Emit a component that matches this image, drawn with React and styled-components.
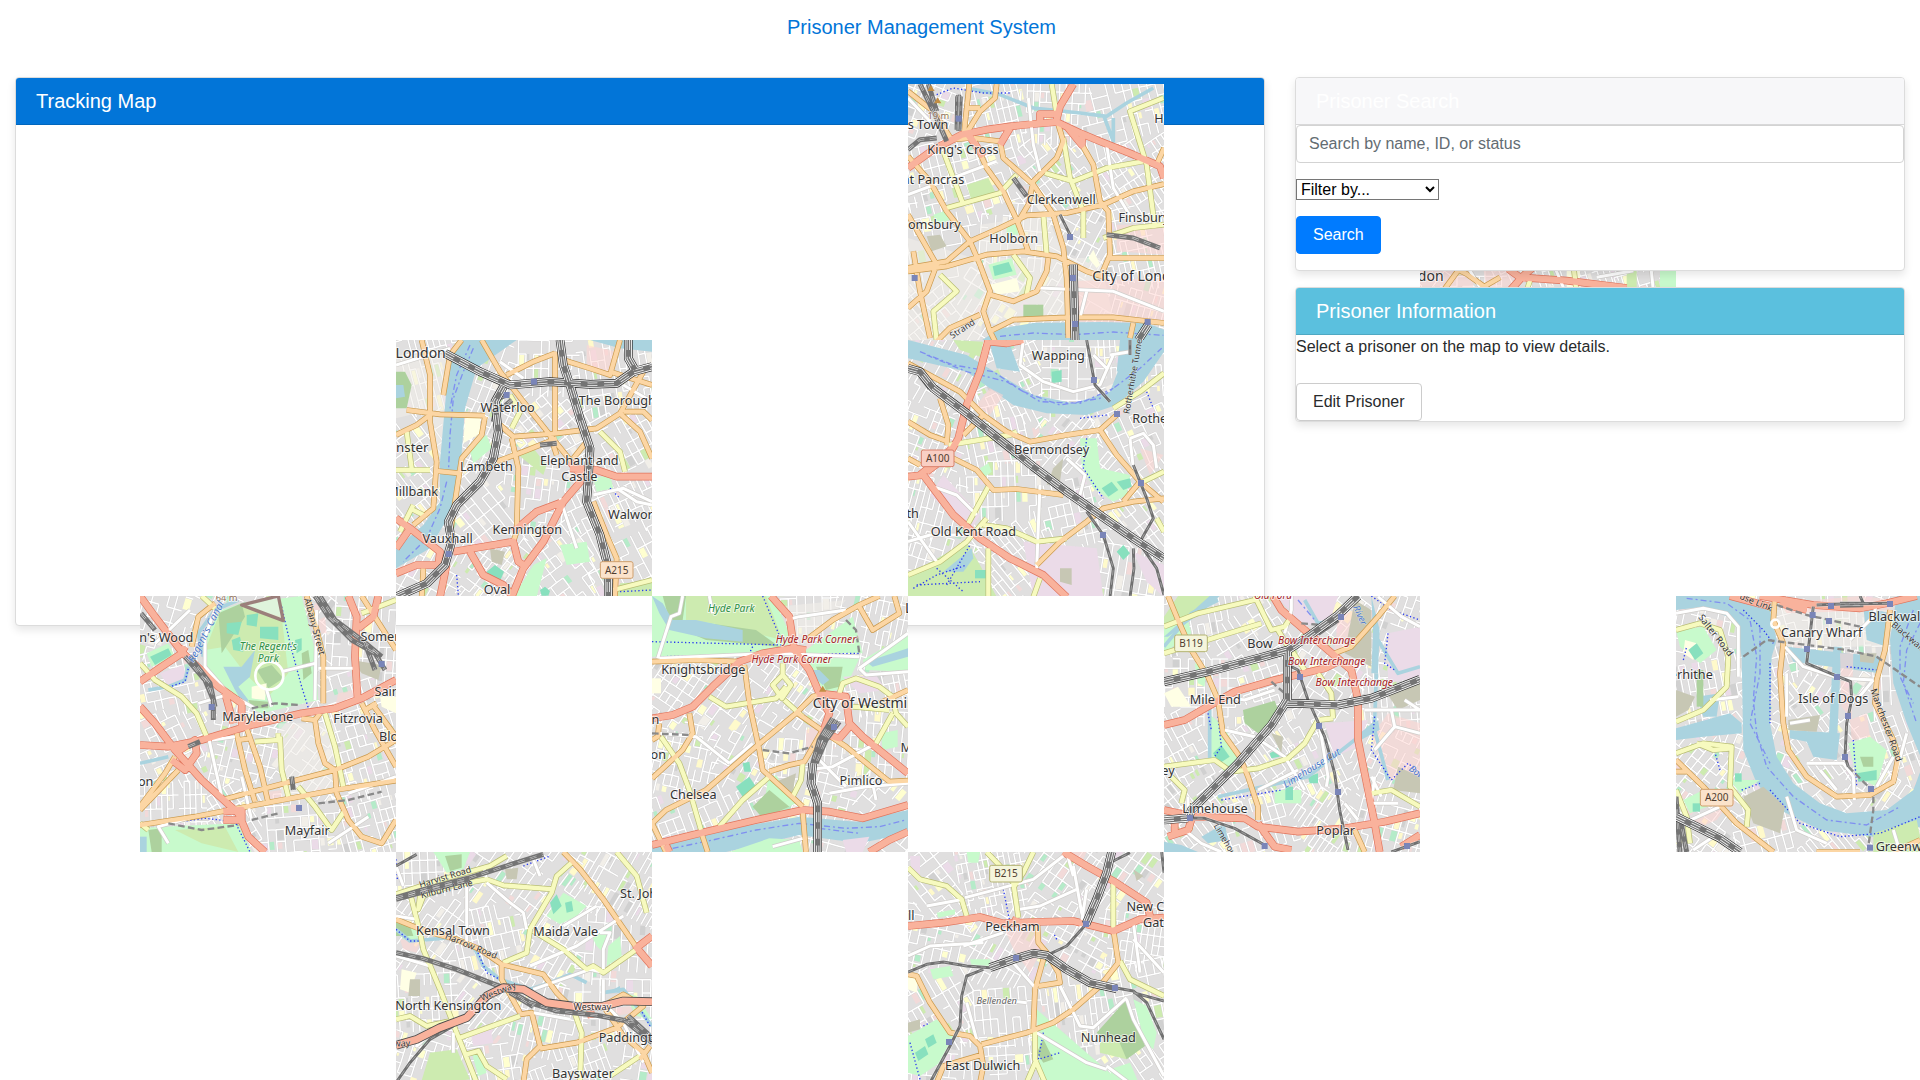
import React from 'react';
import styled, { createGlobalStyle } from 'styled-components';

const GlobalStyle = createGlobalStyle`
  *, *::before, *::after { box-sizing: border-box; }
  body {
    margin: 0;
    background: #fff;
    color: #292b2c;
    font: 16px/24px "Liberation Sans", Arial, sans-serif;
  }
`;

const Page = styled.div`
  min-height: 100vh;
  overflow: hidden;
`;

const Navbar = styled.nav`
  display: flex;
  justify-content: center;
  padding: 12px 93px 12px 16px;
  margin-bottom: 23px;
`;

const Brand = styled.a`
  color: #0275d8;
  font-size: 20px;
  line-height: 30px;
  text-decoration: none;
`;

const Columns = styled.main`
  display: grid;
  grid-template-columns: minmax(0, calc((100% + 30px) * 2 / 3 - 30px)) minmax(0, 1fr);
  gap: 30px;
  align-items: start;
  padding: 0 15px;
`;

const Sidebar = styled.div`
  display: flex;
  flex-direction: column;
  gap: 16px;
  position: relative;
  z-index: 2;
`;

const Card = styled.section`
  background: #fff;
  border: 1px solid #dcdcdc;
  border-radius: 4px;
  box-shadow: 0 4px 8px rgba(0, 0, 0, 0.1);
`;

const headerTones = {
  primary: '#0275d8',
  plain: '#f7f7f9',
  info: '#5bc0de',
};

const CardHeader = styled.h2`
  margin: 0;
  padding: 8px 20px;
  border-bottom: 1px solid rgba(0, 0, 0, 0.125);
  border-radius: 3px 3px 0 0;
  background: ${({ $tone }) => headerTones[$tone]};
  color: #fff;
  font-size: 20px;
  font-weight: 400;
  line-height: 30px;
`;

const SearchForm = styled.form`
  display: flex;
  flex-direction: column;
  align-items: flex-start;
  gap: 16px;
  padding-bottom: 16px;
`;

const TextField = styled.input`
  width: 100%;
  height: 38px;
  padding: 6px 12px;
  border: 1px solid #d3d3d3;
  border-radius: 4px;
  background: #fff;
  color: #464a4c;
  font: inherit;
  &::placeholder { color: #636c72; opacity: 1; }
`;

const Filter = styled.select`
  width: 143px;
  height: 21px;
  border: 1px solid #767676;
  border-radius: 0;
  background: #fff;
  color: #000;
  font-family: inherit;
  font-size: 16px;
`;

const buttonKinds = {
  primary: 'background: #007bff; border-color: #007bff; color: #fff;',
  secondary: 'background: #fff; border-color: #ccc; color: #292b2c;',
};

const Button = styled.button`
  padding: 6px 16px;
  border: 1px solid;
  border-radius: 4px;
  font: inherit;
  cursor: pointer;
  ${({ $kind }) => buttonKinds[$kind]}
`;

const Details = styled.div`
  display: flex;
  flex-direction: column;
  align-items: flex-start;
  gap: 24px;
`;

const Hint = styled.p`
  margin: 0;
`;

const MapCanvas = styled.div`
  position: relative;
  height: 500px;
  z-index: 1;
`;

const Tile = styled.svg`
  position: absolute;
  display: block;
  width: 256px;
  height: 256px;
  left: ${({ $col }) => 124 + $col * 256}px;
  top: ${({ $row }) => $row * 256 - 41}px;
  font-family: "Noto Sans", sans-serif;
`;

/* ---- map data: every coordinate is in tile units, three to a pixel ---- */

const fills = {
  water: '#aad3df', park: '#c8facc', grass: '#cdebb0', wood: '#add19e',
  pitch: '#88e0be', ind: '#ebdbe8', shop: '#ffd6d1', brown: '#c7c7b4',
  pale: '#f2efe9', yellow: '#ffffe5',
};

const roads = {
  white: { edge: '#cfcdca', color: '#ffffff', width: 9 },
  yellow: { edge: '#b8bd74', color: '#f7fabf', width: 13 },
  orange: { edge: '#c9994c', color: '#fcd6a4', width: 13 },
  red: { edge: '#e0745c', color: '#f9b29c', width: 19 },
};

const tiles = [
  {
    col: 3, row: 0, x: 24, y: 18, seed: 3,
    areas: [
      ['pale', '24,480 220,540 260,640 240,786 24,786'],
      ['pale', '250,540 600,540 640,720 270,740'],
      ['pale', '240,440 440,410 490,530 240,530'],
      ['shop', '500,610 792,600 792,740 500,730'],
      ['shop', '650,440 792,440 792,530 650,520'],
      ['park', '265,560 335,540 350,590 280,605'],
      ['pitch', '278,565 326,552 338,580 284,594'],
      ['wood', '370,680 430,680 430,718 370,718'],
      ['park', '100,410 135,398 150,425 115,440'],
      ['park', '320,440 350,440 355,470 320,470'],
      ['grass', '200,320 265,300 290,350 215,370'],
      ['brown', '80,475 120,470 140,505 95,520'],
      ['yellow', '565,540 580,515 600,560 590,570'],
      ['yellow', '270,620 350,600 360,640 290,650'],
      ['water', '240,790 300,752 400,735 600,732 740,735 792,755 792,790'],
    ],
    creeks: ['200,30 300,50 400,90 540,105 620,115 680,75 760,30', '610,110 640,190 640,120'],
    white: ['385,60 400,200 420,280', '24,350 130,310 290,250', '620,200 640,330 700,430', '420,630 640,640 792,700', '540,720 560,640', '24,60 90,130'],
    yellow: ['455,18 470,110', '435,285 520,310 620,270 730,250', '490,180 510,300 550,400 550,480', '140,390 300,345 350,290', '130,220 190,380', '790,60 690,100 740,260 765,450', '430,410 440,530', '120,590 170,640 100,700 110,790', '340,530 390,600 380,650', '610,480 700,450 792,440'],
    orange: ['24,40 100,100 155,185 210,180', '208,18 192,165', '290,18 285,60 240,100 200,165', '195,90 240,90', '220,180 300,190 310,240 400,320 460,410 490,510 500,600 505,780', '220,180 260,270 310,340 350,425 385,520', '24,235 90,310 140,400 210,490 240,560 270,640 250,700 270,760 285,790', '24,570 140,550 210,490 300,450 380,412 500,405 610,380 700,340 792,318', '24,580 140,565 260,530 370,520 470,535 560,580 620,600', '475,140 490,190 470,240 400,310 385,380 355,430', '540,190 580,260 600,370 625,400 630,530 600,600', '620,540 792,540', '24,410 110,560 80,640 24,690', '110,790 150,750 240,710', '445,540 440,580 410,640 340,670 270,650', '270,760 340,725 500,718 640,718 792,735', '690,780 700,735', '792,210 770,260', '40,520 60,640 90,780'],
    red: ['24,270 100,215 185,170 260,155 330,145 400,138 470,132 540,165 600,190 700,230 780,265 792,300', '520,18 480,85 468,132', '468,108 420,108 420,128', '330,150 300,200', '205,170 250,235', '500,145 545,200 548,170'],
    rails: ['480,410 510,470', '170,55 168,155', '184,55 180,155'],
    yards: ['60,18 105,110 140,190', '85,18 110,100', '340,300 380,355', '620,470 700,480 780,510', '24,215 60,185 110,180', '176,50 176,158'],
    mains: ['520,560 525,786', '745,740 715,786'],
    paths: ['110,50 160,30 250,45 330,45'],
    flow: ['300,775 400,765 520,770 640,762 790,772'],
    stations: [[176, 122], [510, 477], [519, 600], [44, 600], [743, 732], [525, 738]],
    peaks: [[93, 30], [113, 67]],
    labels: [['19 m', 115, 122, 28, 0, 'brown'], ['s Town', 84, 154], ["King's Cross", 189, 228], ['nt Pancras', 99, 318], ['Clerkenwell', 484, 379], ['omsbury', 103, 453], ['Finsbury', 732, 433], ['Holborn', 341, 495], ['City of London', 720, 609, 42], ['Ho', 788, 136], ['Strand', 192, 760, 27, -33]],
  },
  {
    col: 1, row: 1, x: 18, y: 15, seed: 7,
    areas: [
      ['pale', '18,60 200,60 160,400 100,230 18,250'],
      ['water', '210,15 380,15 330,50 260,100 225,220 210,420 190,520 120,640 18,700 18,640 100,570 150,500 150,380 175,100'],
      ['water', '600,15 786,15 786,50 690,40'],
      ['wood', '18,110 45,110 65,150 50,220 18,220'],
      ['water', '18,150 40,150 45,185 18,190'],
      ['park', '235,330 290,300 305,340 250,385'],
      ['yellow', '225,250 270,245 270,295 220,325'],
      ['grass', '385,360 430,340 470,390 460,420'],
      ['park', '430,690 470,670 440,786 370,786'],
      ['park', '510,630 590,620 600,680 530,690'],
      ['brown', '300,640 345,650 335,690 305,680'],
      ['pitch', '290,710 315,690 342,710 330,738 305,740'],
      ['pitch', '450,765 465,755 480,768 475,782 455,782'],
      ['shop', '590,30 680,50 660,110 590,90'],
      ['park', '610,430 660,420 670,460 620,470'],
      ['grass', '690,745 786,740 786,786 680,786'],
    ],
    creeks: [],
    white: ['18,90 150,50 180,40', '610,480 700,460 786,500', '680,460 740,500 786,510', '510,490 560,640', '330,80 400,130', '700,150 786,200'],
    yellow: ['18,405 120,405', '50,290 65,400', '630,290 690,350 705,410', '365,280 390,230 360,180', '60,520 100,540', '30,590 70,510', '670,765 786,735'],
    orange: ['95,15 120,120 120,260 140,380 130,520 70,570', '18,300 80,270 120,240', '50,225 150,238 285,242', '215,15 180,60 160,180', '275,15 330,110 400,200 480,300 560,400', '330,270 370,305 500,295 620,280 690,235', '350,120 430,80 495,55', '495,50 495,300', '365,310 385,400 380,590 370,620', '320,380 400,350 500,310', '480,300 500,360', '285,245 275,300 215,370 195,500 180,600', '140,408 210,415', '520,75 600,100 660,120 690,15', '660,110 786,150', '690,235 750,290 786,370', '700,230 760,230 786,255', '760,110 690,235', '550,370 590,320', '610,500 650,600 680,670 675,786', '100,700 95,786'],
    red: ['18,550 60,580 150,650 145,690', '18,640 60,580', '18,715 80,690 145,690', '190,650 370,620 385,680 400,690', '170,690 150,786', '240,650 280,720 340,750 370,786', '580,430 520,500 440,530 370,590', '520,500 460,620 400,700 365,786', '540,400 620,405 680,425 786,425', '540,380 580,430'],
    rails: [],
    yards: ['450,330 500,325', '310,260 325,190 350,180', '325,230 365,195'],
    mains: ['18,786 110,745 165,690 185,620 175,560 200,510 270,440 310,370 325,290 315,200 340,155', '165,55 270,110 360,150 480,140 600,148 680,145 730,110 786,95', '510,15 520,90 540,150 570,250 600,340 595,430 590,500 630,600 655,700 655,786', '715,15 715,70 735,105'],
    paths: ['690,770 786,765', '200,720 205,780', '660,460 690,490'],
    flow: ['250,40 220,110 190,190 180,300 175,420', '240,30 200,120 180,220', '170,440 150,520 110,610 40,680'],
    stations: [[350, 180], [432, 140], [176, 657]],
    badges: [['A215', 680, 705, '#fbe3cb', '#cf9f6d']],
    labels: [['London', 92, 68, 42], ['Waterloo', 353, 231], ['The Borough', 682, 211], ['nster', 67, 350, 40], ['Lambeth', 289, 409], ['Elephant and', 568, 391], ['Castle', 568, 438], ['Millbank', 68, 482], ['Walworth', 740, 552], ['Kennington', 412, 598], ['Vauxhall', 173, 624], ['Oval', 321, 776]],
  },
  {
    col: 3, row: 1, x: 24, y: 15, seed: 11,
    areas: [
      ['water', '24,15 200,60 300,120 400,180 520,205 630,170 690,15 792,15 792,50 730,140 650,210 560,240 440,235 340,210 200,110 24,70'],
      ['water', '270,30 330,30 360,110 290,100'],
      ['water', '660,15 720,15 700,90 650,110'],
      ['grass', '160,15 250,20 240,65 180,45'],
      ['pitch', '455,110 485,105 485,140 455,145'],
      ['ind', '130,420 240,540 210,590 90,480'],
      ['ind', '370,620 590,640 610,786 400,786'],
      ['ind', '700,650 792,690 792,786 740,740'],
      ['park', '540,310 590,310 600,400 690,420 680,480 640,500 580,460 545,390'],
      ['pitch', '605,460 635,440 655,465 625,485'],
      ['pitch', '650,440 690,430 695,455 670,465'],
      ['grass', '24,720 200,620 240,690 290,786 24,786'],
      ['water', '130,710 215,640 220,670 190,710'],
      ['pitch', '225,705 260,705 260,730 225,730'],
      ['pitch', '650,650 670,630 690,655 670,675'],
      ['shop', '270,160 310,180 270,240 230,210'],
      ['shop', '720,340 790,360 750,420'],
      ['brown', '460,400 490,370 480,440 440,450'],
      ['brown', '480,700 515,700 515,750 480,740'],
      ['park', '240,400 265,385 275,410 255,425'],
    ],
    creeks: [],
    white: ['370,15 360,90 430,140 520,170 600,150 640,60', '500,370 555,420 540,480', '690,310 730,295 760,330 770,400', '420,450 410,700', '100,455 170,480 230,540', '24,560 110,680', '580,60 620,100', '690,310 700,400', '24,620 90,600 200,600', '630,60 690,50'],
    yellow: ['24,720 120,680 200,620 260,550', '145,330 330,300 350,290', '205,565 265,455', '250,570 320,580 410,620 500,610', '265,640 265,786', '640,220 720,170 792,115', '400,786 420,730', '730,440 792,410', '770,550 792,590'],
    orange: ['24,85 180,170 250,240 320,290 390,320 500,300 600,285 650,240', '24,260 90,300 145,320', '120,190 145,270 140,330', '150,365 230,405 280,465 350,462 490,480', '410,690 480,620 560,560 610,520 700,500 792,490', '600,285 650,360 720,440 670,500', '720,440 790,500', '250,240 190,300', '24,370 60,390'],
    red: ['265,15 240,110 200,210 175,310 155,345', '270,20 320,25 370,15', '24,425 70,420 100,460 160,540 240,610 330,670 430,720 500,786', '155,340 120,380 80,410', '60,420 90,395'],
    rails: ['690,15 690,60', '700,390 740,490 760,550 720,620', '715,620 770,700 792,780', '560,530 610,600 640,700 630,786', '700,640 702,700 690,786', '560,15 585,150 630,200'],
    yards: ['60,120 90,160'],
    mains: ['24,100 60,110 100,160 200,235 300,315 400,395 500,470 600,540 700,610 792,670'],
    paths: ['40,760 110,720 200,690', '110,700 190,770', '50,750 240,740', '540,250 620,240', '560,310 550,400 610,490', '740,170 760,220', '140,750 210,630'],
    flow: ['60,50 160,90 280,110 370,170 480,210 600,190 720,100 785,40', '80,60 200,110 320,140 420,200 540,205 640,160'],
    stations: [[582, 135], [651, 237], [723, 444], [609, 600]],
    badges: [['A100', 113, 370, '#f9cfc4', '#d9806c']],
    labels: [['Wapping', 475, 75], ['Bermondsey', 455, 358], ['Rotherhithe', 803, 265], ['Old Kent Road', 220, 603], ['th', 38, 550], ['Rotherhithe Tunnel', 708, 122, 26, -80]],
  },
  {
    col: 0, row: 2, x: 15, y: 18, seed: 17,
    areas: [
      ['park', '205,140 260,60 320,40 500,18 540,180 550,330 380,370 290,330 210,240'],
      ['grass', '210,180 250,80 320,50 440,80 460,250 400,320 330,250 270,170'],
      ['wood', '250,70 320,40 330,80 260,190'],
      ['wood', '500,190 520,180 530,250 505,270'],
      ['water', '265,230 320,230 360,180 345,260 310,290 340,330 330,350 300,300'],
      ['pitch', '275,100 320,95 310,135 275,130'],
      ['pitch', '335,75 370,70 365,110 335,105'],
      ['pitch', '375,110 430,110 430,150 375,145'],
      ['pitch', '290,150 315,140 325,185 295,180'],
      ['wood', '365,240 410,225 445,265 400,295'],
      ['yellow', '350,290 395,280 390,330 350,325'],
      ['wood', '340,330 400,335 400,355 350,355'],
      ['pale', '320,45 430,25 440,90'],
      ['park', '35,190 100,160 120,200 50,230'],
      ['pitch', '45,200 100,175 110,195 60,225'],
      ['ind', '75,250 145,225 155,265 100,290'],
      ['park', '15,715 80,710 310,700 350,786 15,786'],
      ['wood', '40,720 80,715 80,786 50,786'],
      ['water', '15,740 35,740 35,786 15,786'],
      ['grass', '120,720 270,710 310,786 200,760'],
      ['brown', '650,210 740,225 730,270 680,250'],
      ['shop', '540,95 570,80 575,130 550,130'],
      ['shop', '610,310 655,300 660,340 600,350'],
      ['shop', '400,605 440,600 440,640 400,640'],
      ['yellow', '735,320 783,320 783,370 740,350'],
      ['pitch', '480,150 500,145 500,180 485,190'],
      ['pale', '430,400 600,400 600,600 440,630'],
    ],
    creeks: ['40,300 100,290 150,270 160,230', '15,520 100,500', '205,200 190,130 240,60 310,30'],
    white: ['240,60 210,140 210,230 280,310 360,355', '440,245 540,220', '100,760 70,710 180,680', '545,60 540,330', '220,440 260,620', '230,450 300,440', '550,235 655,235', '410,350 395,300', '580,760 700,680', '165,60 60,160', '190,340 290,310', '640,610 783,560', '320,560 350,690'],
    yellow: ['15,220 60,270 140,320 185,370 215,440', '15,700 40,720', '570,370 600,470 625,590', '360,455 430,450 430,430', '435,440 440,540 460,620', '490,590 540,650 590,720 630,660', '200,18 240,55', '680,70 783,30'],
    orange: ['240,40 190,80 170,170', '515,18 545,120 565,200 565,340', '305,430 330,540 360,635', '335,415 375,530 400,640', '310,450 345,445', '15,705 180,680 360,645 600,600 783,572', '15,660 130,540', '15,650 90,550 120,500', '260,630 410,590 600,540 700,500 783,450', '500,385 540,390 555,370', '540,390 550,460 570,520 600,540', '600,540 605,610 640,690 680,740 740,760 783,690', '680,340 720,420 783,530', '680,18 783,180', '710,340 783,440', '690,360 725,340'],
    red: ['15,18 60,80 140,185 250,290 320,340 320,410', '15,275 80,230 140,190 150,170', '15,350 60,400 120,480 200,570 310,670 340,740 390,786', '15,465 100,470 200,450 350,405 500,370 600,355 680,325 783,270', '120,490 180,450 185,490 150,540 110,510', '640,18 665,80 660,200 668,330', '730,18 715,80 670,115', '265,665 320,660 320,690 265,690', '270,310 295,400'],
    rails: [],
    yards: ['18,70 60,120', '160,470 195,455', '470,560 475,600', '150,200 210,270 235,330 235,390', '165,200 225,280 240,350', '540,18 580,80 650,150 720,190 750,240', '555,18 600,90 680,150 740,200', '690,160 720,240'],
    dashes: ['100,700 200,720 310,705', '350,355 420,340 490,345', '350,690 430,670', '550,640 640,630 740,605'],
    mains: [],
    paths: ['440,50 470,180 500,290 525,370', '100,700 210,685 300,695 345,786', '90,295 150,275 160,235'],
    flow: [],
    stations: [[740, 222], [230, 351], [492, 654]],
    closed: ['320,45 430,18 445,92'],
    circles: [[403, 257, 42]],
    labels: [['64 m', 275, 34, 28, 0, 'brown'], ["n's Wood", 94, 156], ["The Regent's", 400, 181, 31, 0, 'green'], ['Park', 400, 215, 31, 0, 'green'], ['Marylebone', 368, 392], ['Fitzrovia', 669, 399], ['Somers', 744, 154], ['Saint', 763, 317], ['Bloom', 790, 453], ['on', 32, 587], ['Mayfair', 517, 734], ["Regent's Canal", 222, 130, 31, -63, 'blue'], ['Albany Street', 530, 112, 28, 75]],
  },
  {
    col: 2, row: 2, x: 18, y: 18, seed: 23,
    areas: [
      ['park', '18,18 380,18 440,150 400,185 18,200'],
      ['grass', '120,18 360,18 410,150 200,100 120,90'],
      ['wood', '50,18 120,18 110,90 70,90'],
      ['wood', '120,90 330,120 400,170 180,150 90,110'],
      ['water', '18,18 50,40 80,90 150,90 290,120 290,155 180,145 70,120 40,70'],
      ['park', '480,180 620,80 650,190 480,190'],
      ['park', '465,205 640,205 600,290 540,310'],
      ['wood', '510,230 590,230 580,290 540,300'],
      ['water', '480,240 520,240 550,270 530,285'],
      ['park', '650,210 786,130 786,245 660,240'],
      ['water', '660,215 786,175 786,200 680,230'],
      ['ind', '590,260 690,255 720,300 640,310'],
      ['park', '365,570 390,555 450,640 350,690'],
      ['wood', '320,650 370,600 430,650 350,685'],
      ['pitch', '270,590 310,560 330,590 290,620'],
      ['pitch', '290,520 310,515 315,545 295,545'],
      ['brown', '380,580 450,550 440,610'],
      ['pale', '395,50 600,30 480,160 460,150'],
      ['shop', '480,420 530,400 480,500'],
      ['park', '705,430 755,420 755,470 710,480'],
      ['yellow', '18,265 45,265 45,310 18,310'],
      ['water', '18,755 200,725 460,680 630,695 786,660 786,730 640,760 460,735 240,786 18,786'],
      ['park', '250,786 370,745 460,750 470,786'],
      ['ind', '590,750 670,740 650,786 600,786'],
    ],
    creeks: [],
    white: ['110,18 100,70 75,80 35,205', '40,205 380,190 640,200', '200,70 190,18', '640,235 786,130', '640,235 660,255 786,245', '480,540 560,530 690,460', '550,610 660,590 786,580', '40,430 150,440 250,520', '250,520 320,460', '420,90 460,80 600,60', '520,510 600,590', '380,770 470,745', '690,630 680,580'],
    yellow: ['190,320 240,350 390,325 420,290', '410,220 410,260', '410,255 435,285 408,325 380,285 410,255', '415,330 470,380', '45,440 100,520 130,600 165,720', '220,710 290,630 370,560', '580,310 590,280 630,265 700,290 740,320 750,370 786,410', '740,370 690,460', '470,520 465,570 440,620', '620,350 730,360'],
    orange: ['18,215 150,210 280,215', '295,225 310,340 340,480 350,540 470,650', '18,700 60,660 180,600 330,470 450,370 500,320 530,310', '455,370 540,430 600,470 730,575 786,572', '370,545 430,525 475,515 530,420', '480,150 560,90 640,45 700,18', '640,50 680,120 760,70 745,18', '130,370 140,430 110,480 18,565', '18,700 60,786', '40,400 35,440 18,450', '165,725 185,786', '470,665 480,786', '700,340 786,300'],
    red: ['18,385 80,375 140,350 200,290 280,215 350,190 440,175 480,180', '375,18 430,80 445,180 490,240 520,310 600,320 610,400 650,440 786,550', '520,315 550,370 530,430 580,445 610,410', '18,765 160,730 330,690 470,660 550,665 650,685 786,645', '670,786 730,750 786,725', '60,765 70,786'],
    rails: [],
    yards: ['560,385 520,450 500,520', '580,395 540,450 510,520', '570,390 530,450'],
    dashes: ['18,430 130,435', '600,90 630,120 640,190', '350,480 430,490 500,470'],
    mains: ['500,520 495,580 515,640 515,786'],
    paths: ['18,155 410,165', '350,18 410,160', '40,200 640,190', '320,170 310,190'],
    flow: ['80,775 200,750 330,720 460,700 600,715 700,710 780,690', '520,715 640,730'],
    stations: [[564, 411]],
    peaks: [[530, 296]],
    labels: [['Hyde Park', 256, 65, 31, 0, 'green'], ['Hyde Park Corner', 510, 158, 31, 0, 'red'], ['Hyde Park Corner', 437, 218, 31, 0, 'red'], ['Knightsbridge', 172, 253], ['City of Westminster', 693, 354, 42], ['n', 28, 401], ['on', 37, 507], ['M', 781, 485], ['L', 788, 70, 42], ['Pimlico', 645, 585], ['Chelsea', 142, 627]],
  },
  {
    col: 4, row: 2, x: 18, y: 18, seed: 29,
    areas: [
      ['grass', '60,18 175,18 140,60 80,90 18,120 18,80'],
      ['park', '18,110 90,90 100,130 18,190'],
      ['water', '155,18 185,18 140,60 30,140 18,140'],
      ['ind', '355,18 540,18 520,80 440,110'],
      ['ind', '690,130 786,110 786,260 690,280'],
      ['ind', '500,400 630,390 600,470 530,500'],
      ['shop', '540,80 590,60 580,170 530,180'],
      ['brown', '590,30 640,60 640,230 560,190'],
      ['brown', '680,300 786,270 786,330 720,360'],
      ['shop', '640,440 690,370 786,400 786,560 690,570'],
      ['brown', '720,530 786,560 786,610 705,600'],
      ['brown', '340,430 375,440 370,490'],
      ['wood', '255,360 350,332 365,370 300,430 260,400'],
      ['park', '150,370 200,410 250,520 200,545 160,500'],
      ['pitch', '165,490 190,465 215,500 185,520'],
      ['pitch', '335,490 360,475 365,500 340,505'],
      ['park', '350,600 430,600 430,640 350,640'],
      ['pitch', '382,590 405,590 405,630 382,630'],
      ['pitch', '450,560 480,550 480,580 455,580'],
      ['yellow', '18,310 60,290 100,350 40,350'],
      ['park', '110,220 145,230 140,290 120,280'],
      ['water', '640,18 665,120 660,250 640,250 645,130'],
      ['water', '570,480 660,390 665,420 590,460'],
      ['water', '18,755 70,765 120,786 18,786'],
      ['water', '130,740 200,700 210,750 150,760'],
    ],
    creeks: ['18,170 100,70 180,30', '155,340 155,520', '180,620 450,560 590,450 650,400 655,250', '660,150 720,250 786,230', '440,30 480,100 540,90', '650,420 690,570'],
    white: ['380,130 400,60 400,18', '480,380 510,560 505,590', '620,360 786,360 740,330', '700,360 710,410 650,480', '710,410 786,430', '200,420 290,440 380,500 440,600', '300,600 420,540', '650,560 640,640 720,640', '560,640 600,690', '80,720 130,760 190,786', '660,20 730,80 786,110', '190,320 260,330 350,300', '90,620 90,680', '640,560 670,620'],
    yellow: ['18,110 120,70 290,30', '18,190 180,140 310,100', '290,18 320,80 340,120 380,110 400,80', '18,530 170,510 220,545 300,535 390,505 440,460 480,390 525,385', '480,250 520,310 525,385', '640,610 700,600 786,650', '40,560 80,600 70,640', '360,120 390,170', '400,180 440,240'],
    orange: ['30,18 60,90 100,180 150,260 180,330 195,430 245,500 270,560 300,650 300,690', '710,18 660,80 580,170 530,190', '100,690 95,720', '590,720 620,786'],
    red: ['18,405 80,390 140,355 230,305 350,270 500,235 540,215', '345,18 370,60 440,120 510,180 580,240 600,330 600,450 630,600 650,700 665,786', '18,660 110,680 260,685 300,710 420,725 560,715 680,695 786,670', '300,700 350,770 400,780', '30,740 90,720 100,690', '786,735 730,770', '50,680 50,730'],
    rails: ['380,220 420,240 450,330 500,440 530,550 545,660 570,780', '90,684 140,685 230,715 320,765', '700,786 786,755'],
    yards: ['540,70 600,18', '480,130 540,90'],
    dashes: ['340,275 380,310', '430,100 490,105'],
    mains: ['18,275 150,245 300,205 390,180 450,140 540,75 600,18', '388,180 388,330 340,405 240,520 100,660 90,690', '388,340 420,340 540,345 640,325 786,268', '18,690 90,684'],
    paths: ['640,18 700,60 786,90', '690,130 680,220 710,240', '650,380 640,480 700,570 750,520 786,550', '190,630 370,600', '180,380 190,470 170,500', '150,370 160,420'],
    flow: ['420,30 470,90'],
    stations: [[549, 81], [426, 261], [483, 408], [540, 606], [96, 684], [320, 768], [747, 768]],
    badges: [['B119', 99, 160, '#f5f5dc', '#b3b370']],
    labels: [['Old Ford', 345, 28, 30, 0, 'red'], ['Bow', 306, 175], ['Bow Interchange', 476, 163, 31, 0, 'red'], ['Bow Interchange', 506, 224, 31, 0, 'red'], ['Bow Interchange', 589, 287, 31, 0, 'red'], ['Mile End', 172, 341], ['Limehouse Cut', 466, 543, 30, -32, 'blue'], ['Limehouse', 171, 670], ['Poplar', 533, 735], ['ey', 30, 556], ['River', 598, 80, 28, 65, 'blue'], ['Limehouse Link', 214, 790, 26, 60], ['Bow', 772, 555, 28, 35, 'blue']],
  },
  {
    col: 6, row: 2, x: 48, y: 18, seed: 31,
    areas: [
      ['water', '48,18 260,18 330,60 350,150 335,200 330,400 350,500 400,580 480,640 560,670 680,660 760,600 790,520 740,400 700,280 690,150 710,18 830,18 830,700 640,740 480,720 360,660 290,580 250,480 245,200 225,90 130,50 48,60'],
      ['pale', '350,60 690,60 660,170 370,170'],
      ['water', '380,170 660,200 660,250 400,215'],
      ['water', '610,50 690,70 680,170 620,150'],
      ['water', '520,170 545,170 530,470 505,470'],
      ['water', '390,420 540,430 530,510 460,500 440,455 390,445'],
      ['water', '48,415 210,370 245,400 245,430 130,440 48,450'],
      ['water', '110,320 180,310 170,380 130,380'],
      ['shop', '360,40 600,18 700,30 690,60 380,70'],
      ['shop', '570,390 620,370 630,440 575,450'],
      ['shop', '540,190 580,190 575,390 545,350'],
      ['brown', '385,390 480,375 470,425 385,420'],
      ['brown', '600,190 650,190 640,220 600,215'],
      ['park', '48,120 130,110 170,180 120,220 60,170'],
      ['yellow', '75,150 110,160 100,210 70,190'],
      ['pitch', '85,180 110,160 130,190 105,210'],
      ['wood', '110,240 130,240 130,350 110,350'],
      ['brown', '48,300 105,320 85,360 48,380'],
      ['park', '565,460 630,440 680,480 650,590 590,560'],
      ['pitch', '590,550 650,540 650,570 595,575'],
      ['wood', '600,500 640,500 640,530 610,530'],
      ['brown', '250,620 310,590 375,650 360,730 280,700'],
      ['park', '70,630 130,600 170,640 90,670'],
      ['pitch', '98,640 120,640 120,665 98,665'],
      ['park', '210,570 300,570 240,610'],
      ['pitch', '225,550 245,550 245,575 225,575'],
      ['shop', '80,700 200,650 170,690 100,720'],
      ['grass', '640,730 770,690 790,786 640,786'],
    ],
    creeks: [],
    white: ['48,70 130,55 200,70 235,110 235,260', '375,170 430,230 540,265 640,270', '390,400 450,390', '440,520 550,520 580,560 583,630', '480,540 530,600', '150,330 235,320', '640,270 590,330', '380,250 380,380', '740,430 700,580', '48,710 180,650', '650,590 700,500', '100,780 160,740', '570,150 640,80 650,40', '380,620 410,720 500,760', '700,720 720,786'],
    yellow: ['48,120 120,100 180,120 205,200 200,290 130,360 48,395', '48,490 130,460 215,470 210,590 265,660 260,710', '48,600 80,680 90,760', '110,460 160,480 215,475'],
    orange: ['345,18 340,90 370,160 360,250 370,400 385,480 440,560 530,620 630,615 700,575 715,500', '690,60 675,180 650,270 645,340 700,450 715,500', '48,510 130,590 230,700 340,786', '700,786 780,750', '48,545 80,545', '470,786 600,786'],
    red: ['300,18 460,45 600,55 680,40 770,18', '360,40 440,60', '210,18 330,50'],
    rails: ['460,50 440,220 540,262 572,275 575,330 560,400 555,500 565,530', '470,45 540,42 690,40', '540,40 610,40 600,18'],
    yards: ['540,46 610,44', '48,620 60,786', '60,680 80,786'],
    dashes: ['565,530 632,597', '640,620 640,660 625,770', '350,45 440,75 600,110', '250,200 320,150 560,180 650,200 780,290'],
    mains: ['48,680 110,710 180,745 240,786'],
    paths: ['250,60 310,120 340,160', '190,470 160,470 180,540', '580,450 590,590', '245,600 300,580', '70,210 80,170', '330,600 420,700 540,740 660,730 780,680', '560,230 650,240', '330,220 330,400'],
    flow: ['80,25 200,40 270,90 290,200 280,330 290,430 320,530 400,620 500,690 620,705 720,650', '300,110 300,250 270,400 330,520', '800,60 740,180 730,280 770,400', '760,60 720,170 720,260 760,340'],
    stations: [[513, 48], [458, 75], [507, 93], [441, 177], [531, 261], [564, 378], [555, 501], [633, 597], [690, 42], [630, 773]],
    badges: [['A200', 170, 623, '#fbe3cb', '#cf9f6d']],
    circles: [[346, 101, 12]],
    labels: [['Salter Road', 160, 142, 28, 52], ['Canary Wharf', 485, 140], ['Blackwall', 708, 93], ['erhithe', 94, 267], ['Isle of Dogs', 520, 338], ['Manchester Road', 670, 408, 28, 70], ['Blackwall Tunnel', 773, 175, 27, 40], ['use Link', 285, 45, 27, 22], ['Greenwich', 742, 782]],
  },
  {
    col: 1, row: 3, x: 18, y: 18, seed: 37,
    areas: [
      ['park', '130,18 240,18 220,70 170,80'],
      ['wood', '165,30 215,25 215,65 180,75'],
      ['park', '470,210 520,140 590,180 560,210 510,235'],
      ['pitch', '480,170 500,145 515,180 490,205'],
      ['pitch', '525,170 545,165 550,195 530,200'],
      ['brown', '345,70 385,65 380,100 350,100'],
      ['park', '18,240 80,250 85,285 40,280'],
      ['wood', '18,230 60,240 70,270 18,270'],
      ['shop', '30,280 90,290 80,320 40,310'],
      ['yellow', '35,370 80,380 60,440 30,430'],
      ['brown', '60,400 90,400 90,450 55,450'],
      ['shop', '660,490 720,480 730,500 680,510'],
      ['park', '600,260 650,260 640,320 620,300'],
      ['park', '655,300 690,270 695,330 650,360'],
      ['water', '650,440 690,420 690,440'],
      ['park', '700,440 740,450 786,520 740,510'],
      ['grass', '120,620 200,610 240,700 90,720'],
      ['park', '245,620 270,615 290,680 265,690'],
      ['ind', '240,550 300,540 310,590 250,600'],
    ],
    creeks: ['18,250 60,285 100,282 180,275 250,300 280,360 330,400 420,430 480,410 540,385 590,410', '640,440 700,430 786,540'],
    white: ['280,60 290,100', '18,210 80,220', '290,110 360,170 400,200 410,250', '420,360 560,300 700,210', '640,370 640,310 660,260 630,260', '520,240 620,180', '120,345 220,380', '430,500 540,520', '430,430 600,370 640,380', '190,560 190,620', '90,580 80,600 160,530 240,530', '230,120 230,300', '640,400 640,470 700,530 760,650', '18,330 120,360', '430,40 450,90', '18,60 40,120'],
    yellow: ['18,145 140,105 300,60 350,30', '60,140 90,260 100,310 150,430 200,560 260,710', '90,150 85,190 100,150 180,120 290,100 340,118 490,130', '545,50 500,90 485,140 420,250 410,320 340,350', '430,255 520,310 590,370 610,360 640,380 740,310', '18,520 60,510 110,540 180,525', '210,575 390,510', '550,490 575,560 570,710', '230,625 265,615 290,660 350,700', '680,18 740,90 770,200', '660,690 750,630'],
    orange: ['18,220 80,245 130,262 200,280 270,310 335,355 460,385 500,440 530,470', '520,18 570,70 640,160 740,305', '335,355 335,400 390,500', '390,505 425,500 450,600 410,640 400,710', '450,608 560,590 680,545 760,480 700,445 640,480', '640,480 700,570 760,620', '780,600 750,640', '760,620 786,680'],
    red: ['786,270 740,305 786,360', '600,490 605,515'],
    rails: ['18,710 60,650 120,580 190,540', '18,60 80,25'],
    yards: ['18,155 120,125 240,95 380,50 460,25', '18,160 120,132 240,102', '18,320 100,338 200,370 300,410 340,425', '350,430 420,470 500,495 620,508 740,530', '360,440 430,482', '700,520 786,590', '715,510 786,575'],
    mains: [],
    over: ['18,598 80,580 150,545 230,515 290,450 340,425 400,430 470,470 560,482 640,480 700,465 786,467'],
    paths: ['18,250 60,285 90,285', '255,300 290,380 350,410', '440,430 560,385', '400,60 480,30', '18,40 22,100', '740,470 780,540'],
    flow: [],
    stations: [],
    labels: [['Harvist Road', 168, 102, 27, -17], ['Kilburn Lane', 172, 138, 27, -14], ['Kensal Town', 189, 268], ['Maida Vale', 527, 270], ["St. John's", 770, 157], ['Harrow Road', 240, 308, 27, 22], ['Westway', 328, 445, 27, -22], ['Westway', 607, 493, 27, 0], ['North Kensington', 175, 493], ['way', 36, 601, 27, -3], ['Paddington', 730, 588], ['Bayswater', 579, 697]],
  },
  {
    col: 3, row: 3, x: 24, y: 18, seed: 41,
    areas: [
      ['ind', '30,30 60,30 60,90 35,80'],
      ['park', '200,18 240,18 235,50 205,50'],
      ['shop', '310,240 400,240 420,320 390,380 340,310'],
      ['park', '110,200 165,190 165,205 115,215'],
      ['shop', '500,18 560,18 540,60'],
      ['park', '90,370 150,360 160,390 100,400'],
      ['park', '210,340 270,340 270,360 215,360'],
      ['wood', '680,460 735,600 680,640 590,560'],
      ['park', '700,460 740,480 770,560 760,610 735,590'],
      ['grass', '600,590 650,570 680,640 600,620'],
      ['park', '410,490 560,620 640,690 640,720 420,720'],
      ['wood', '410,620 430,580 460,640 430,650'],
      ['park', '24,570 110,520 160,570 120,650 60,690 24,680'],
      ['pitch', '75,580 100,565 110,590 85,605'],
      ['pitch', '45,620 75,600 85,625 55,645'],
      ['yellow', '24,390 55,390 50,440 24,430'],
      ['brown', '24,530 60,520 60,550 24,560'],
      ['brown', '700,70 730,90 710,105'],
      ['park', '630,670 690,650 720,720 640,720'],
    ],
    creeks: [],
    white: ['195,155 290,130 400,100 490,30', '80,180 190,160', '360,190 420,180 530,130', '520,60 545,200 560,240', '480,420 540,540 580,545 680,455', '410,560 560,650 620,670', '620,660 700,720', '680,460 700,520 792,690', '280,460 380,470', '560,130 540,260', '190,300 310,260', '500,18 520,90', '700,280 792,380', '24,330 90,300 250,290', '200,470 230,580', '700,230 720,380', '330,340 410,430'],
    yellow: ['24,65 60,100 140,120 185,160 200,210', '260,18 300,60 340,110 355,215', '400,18 370,80 340,125', '640,110 640,250', '660,345 690,400 792,450', '405,550 405,640 435,710', '410,640 380,710'],
    orange: ['24,385 50,390 90,470 150,560 210,570 240,600 250,660 240,710', '110,710 130,660 250,625', '245,595 380,560 460,530 520,490 600,420 655,350 640,250', '412,230 415,290 440,320 475,380 480,410 415,420', '430,340 405,430 400,550', '440,330 460,340'],
    red: ['24,240 130,230 240,213 310,232 400,228 520,225 640,255 720,220 792,215', '490,18 560,60 640,105 740,170 750,210', '350,215 340,240'],
    rails: ['24,378 80,355 130,348 200,360 270,365', '250,370 200,390 185,450 180,540 150,600 90,710', '440,328 500,300 545,250 558,234', '645,425 700,435 740,470 792,580', '700,440 792,465', '640,45 690,20', '785,18 792,80'],
    yards: [],
    mains: ['270,365 340,340 400,322 440,328 500,370 570,410 650,428', '558,234 590,160 620,80 635,18'],
    paths: ['310,130 330,230', '470,280 460,260', '430,560 415,640 480,620', '30,590 60,700', '70,540 90,530'],
    flow: [],
    stations: [[558, 234], [348, 336], [645, 426], [147, 588]],
    badges: [['B215', 318, 83, '#f5f5dc', '#b3b370']],
    labels: [['ll', 34, 221], ['Peckham', 337, 254], ['New Cross', 773, 196], ['Gate', 771, 243], ['Bellenden', 290, 475, 28, 0, 'grey'], ['Nunhead', 625, 588], ['East Dulwich', 248, 672]],
  },
  {
    col: 5, row: 0, x: 0, y: 0, seed: 43,
    areas: [
      ['shop', '0,500 160,500 160,640 0,640'],
      ['shop', '190,555 300,555 260,620 200,620'],
      ['yellow', '440,540 480,540 480,620 440,620'],
      ['park', '720,550 768,550 768,620 720,620'],
      ['grass', '620,540 650,540 650,620 620,620'],
    ],
    creeks: [],
    white: ['150,560 180,610', '400,540 430,610', '690,520 700,620', '530,580 640,560'],
    yellow: ['460,540 470,630', '330,590 320,620'],
    orange: ['125,545 70,620', '100,550 140,570 210,620', '180,615 240,580'],
    red: ['270,620 310,575 340,550', '265,555 300,580 440,590 620,612'],
    rails: [], yards: [], mains: [], paths: [], flow: [], stations: [],
    labels: [['don', 32, 590, 42]],
  },
];

/* Deterministic noise, so that a tile always gets the same side streets. */
function makeRandom(seed) {
  let state = seed * 7919 + 17;
  return () => {
    state = (state * 16807) % 2147483647;
    return state / 2147483647;
  };
}

function makeStreets({ x, y, seed }) {
  const rnd = makeRandom(seed);
  const districts = [];
  for (let i = 0; i < 4; i += 1) {
    for (let j = 0; j < 4; j += 1) {
      districts.push({
        cx: x + (i + 0.2 + rnd() * 0.6) * 192,
        cy: y + (j + 0.2 + rnd() * 0.6) * 192,
        angle: -0.7 + rnd() * 1.4,
        w: 16 + rnd() * 12,
        h: 28 + rnd() * 20,
      });
    }
  }
  const colors = ['#f2dad9', '#ffffd0', '#cdebb0', '#b5ebc9', '#f2efe9', '#d0d0d0', '#ebdbe8', '#fffacb'];
  const blocks = [];
  let streets = '';
  districts.forEach((d) => {
    const cos = Math.cos(d.angle);
    const sin = Math.sin(d.angle);
    const at = (u, v) => [Math.round(d.cx + u * cos - v * sin), Math.round(d.cy + u * sin + v * cos)];
    const mine = ([px, py]) => districts.every((o) => (
      o === d || (o.cx - px) ** 2 + (o.cy - py) ** 2 >= (d.cx - px) ** 2 + (d.cy - py) ** 2
    ));
    for (let i = -13; i < 13; i += 1) {
      for (let j = -8; j < 8; j += 1) {
        const u = i * d.w;
        const v = j * d.h;
        if (mine(at(u + d.w / 2, v + d.h / 2))) {
          const p = at(u, v);
          if (rnd() < 0.68) streets += `M${p}L${at(u + d.w, v)}`;
          if (rnd() < 0.72) streets += `M${p}L${at(u, v + d.h)}`;
          if (rnd() < 0.26) {
            const s = 0.4 + rnd() * 0.6;
            const pts = [p, at(u + d.w * s, v), at(u + d.w * s, v + d.h * s), at(u, v + d.h * s)];
            blocks.push({ pts: pts.join(' '), fill: colors[Math.floor(rnd() * colors.length)] });
          }
        }
      }
    }
  });
  return { streets, blocks };
}

const toPath = (lines = []) => lines.map((line) => `M${line}`).join(' ');

const labelColors = { green: '#2f8f46', red: '#a52226', blue: '#4a78c8', grey: '#666', brown: '#8f6f5a' };

function MapLabel({ label }) {
  const [text, x, y, size = 38, angle = 0, tone] = label;
  return (
    <text
      x={x}
      y={y}
      fontSize={size}
      textAnchor="middle"
      transform={angle ? `rotate(${angle} ${x} ${y})` : undefined}
      fontStyle={tone && tone !== 'brown' ? 'italic' : 'normal'}
      fill={labelColors[tone] || '#333'}
      stroke="#fff"
      strokeOpacity="0.65"
      strokeWidth={angle ? 2 : 6}
      strokeLinejoin="round"
      paintOrder="stroke"
    >
      {text}
    </text>
  );
}

function MapTile({ tile }) {
  const { streets, blocks } = makeStreets(tile);
  const order = ['white', 'yellow', 'orange', 'red'];
  const rails = toPath(tile.rails);
  const yards = toPath(tile.yards);
  const mains = toPath(tile.mains);
  const over = toPath(tile.over);
  return (
    <Tile $col={tile.col} $row={tile.row} viewBox={`${tile.x} ${tile.y} 768 768`} aria-hidden="true">
      <rect x={tile.x} y={tile.y} width="768" height="768" fill="#e0dfdf" />
      {blocks.map((b, i) => <polygon key={i} points={b.pts} fill={b.fill} />)}
      <path d={streets} fill="none" stroke="#c9c8c8" strokeWidth="6" />
      <path d={streets} fill="none" stroke="#fff" strokeWidth="4.5" />
      {tile.areas.map(([kind, pts], i) => (
        <polygon key={i} points={pts} fill={fills[kind]} fillOpacity={kind === 'pale' || kind === 'shop' ? 0.55 : 1} />
      ))}
      <g fill="none" strokeLinejoin="round" strokeLinecap="butt">
        <path d={toPath(tile.creeks)} stroke="#aad3df" strokeWidth="11" />
        <path d={toPath(tile.flow)} stroke="#7f8ff0" strokeWidth="4" strokeDasharray="18 9 6 9" />
        <path d={toPath(tile.paths)} stroke="#2b3cf0" strokeWidth="4" strokeDasharray="4 7" />
        {order.map((kind) => (
          <path key={kind} d={toPath(tile[kind])} stroke={roads[kind].edge} strokeWidth={roads[kind].width + 4} />
        ))}
        {order.map((kind) => (
          <path key={kind} d={toPath(tile[kind])} stroke={roads[kind].color} strokeWidth={roads[kind].width} />
        ))}
        <path d={toPath(tile.dashes)} stroke="#8a8a8a" strokeWidth="7" strokeDasharray="20 10" />
        <path d={yards} stroke="#747474" strokeWidth="15" />
        <path d={yards} stroke="#d4d4d4" strokeWidth="6" strokeDasharray="22 16" />
        <path d={yards} stroke="#747474" strokeWidth="3" />
        <path d={rails} stroke="#fff" strokeWidth="12" strokeOpacity="0.6" />
        <path d={rails} stroke="#707070" strokeWidth="9" />
        <path d={rails} stroke="#b8b8b8" strokeWidth="2" strokeDasharray="16 12" />
        <path d={mains} stroke="#2b2b2b" strokeWidth="26" />
        <path d={mains} stroke="#fff" strokeWidth="22" />
        <path d={mains} stroke="#747474" strokeWidth="17" />
        <path d={mains} stroke="#f2f2f2" strokeWidth="10" strokeDasharray="30 20" />
        <path d={mains} stroke="#747474" strokeWidth="5" />
        <path d={over} stroke="#4a4a4a" strokeWidth="26" />
        <path d={over} stroke={roads.red.color} strokeWidth="21" />
        {tile.closed && <path d={`${toPath(tile.closed)}Z`} stroke="#9b7f7b" strokeWidth="10" />}
      </g>
      {(tile.circles || []).map(([cx, cy, r]) => (
        <circle key={cx} cx={cx} cy={cy} r={r} fill="none" stroke="#fff" strokeWidth="8" />
      ))}
      {(tile.peaks || []).map(([cx, cy]) => (
        <polygon key={cx} points={`${cx - 11},${cy + 9} ${cx},${cy - 9} ${cx + 11},${cy + 9}`} fill="#c28f45" />
      ))}
      {tile.stations.map(([cx, cy]) => (
        <rect key={`${cx}-${cy}`} x={cx - 9} y={cy - 9} width="18" height="18" fill="#7a85b8" />
      ))}
      {(tile.badges || []).map(([text, cx, cy, fill, edge]) => (
        <g key={text}>
          <rect x={cx - 49} y={cy - 25} width="98" height="50" rx="6" fill={fill} stroke={edge} strokeWidth="3" />
          <text x={cx} y={cy + 11} fontSize="30" textAnchor="middle" fill="#4f3d30">{text}</text>
        </g>
      ))}
      {tile.labels.map((label, i) => <MapLabel key={i} label={label} />)}
    </Tile>
  );
}

export default function App() {
  return (
    <Page>
      <GlobalStyle />
      <Navbar>
        <Brand href="#">Prisoner Management System</Brand>
      </Navbar>
      <Columns>
        <Card>
          <CardHeader $tone="primary">Tracking Map</CardHeader>
          <MapCanvas>
            {tiles.map((tile) => <MapTile key={`${tile.col}-${tile.row}`} tile={tile} />)}
          </MapCanvas>
        </Card>
        <Sidebar>
          <Card>
            <CardHeader $tone="plain">Prisoner Search</CardHeader>
            <SearchForm onSubmit={(event) => event.preventDefault()}>
              <TextField type="text" aria-label="Search prisoners" placeholder="Search by name, ID, or status" />
              <Filter aria-label="Filter by" defaultValue="">
                <option value="">Filter by...</option>
                <option value="location">Location</option>
                <option value="status">Status</option>
              </Filter>
              <Button type="submit" $kind="primary">Search</Button>
            </SearchForm>
          </Card>
          <Card>
            <CardHeader $tone="info">Prisoner Information</CardHeader>
            <Details>
              <Hint>Select a prisoner on the map to view details.</Hint>
              <Button type="button" $kind="secondary">Edit Prisoner</Button>
            </Details>
          </Card>
        </Sidebar>
      </Columns>
    </Page>
  );
}
